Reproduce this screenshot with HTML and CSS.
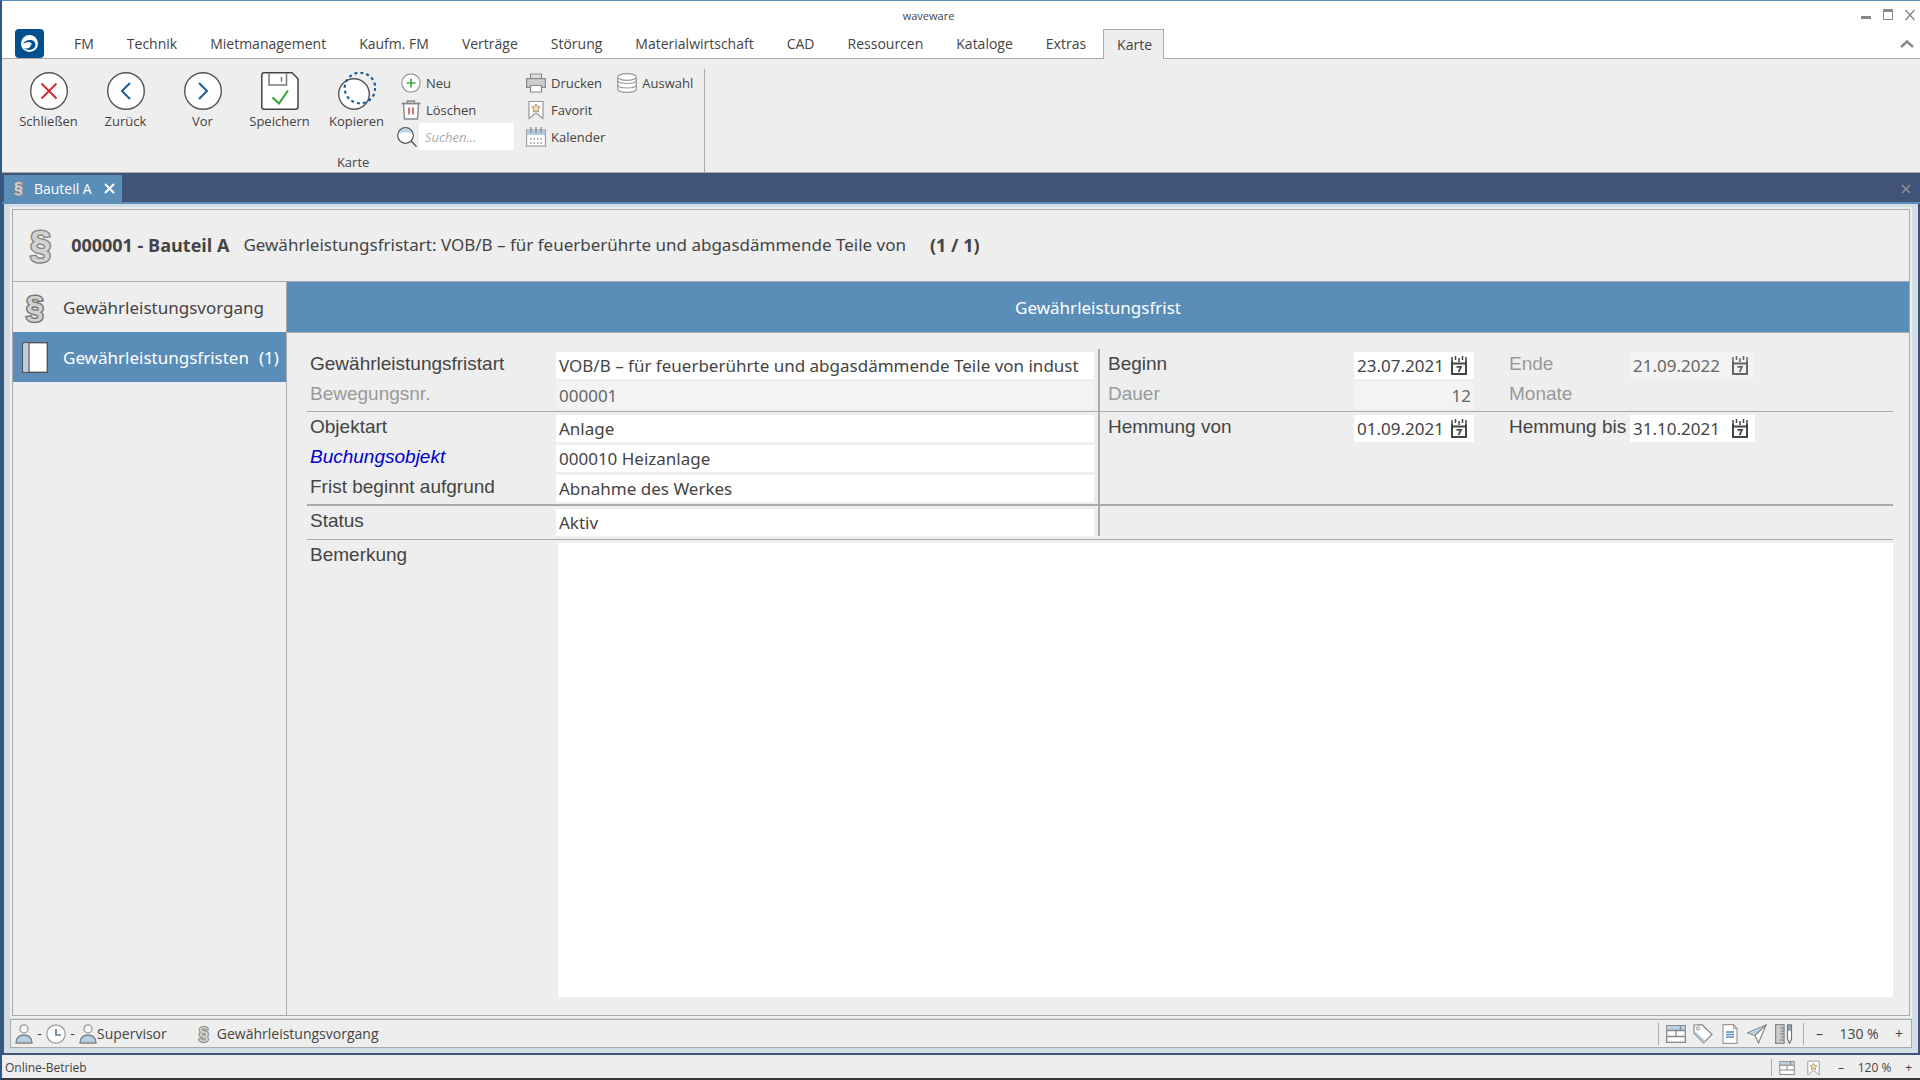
FILE: index.html
```html
<!DOCTYPE html>
<html lang="de">
  <head>
    <meta charset="UTF-8" />
    <meta name="viewport" content="width=device-width, initial-scale=1.0" />
    <title>waveware</title>
    <link rel="stylesheet" href="styles.css">
  </head>
  <body>
    <!-- icons used more than once -->
    <svg class="sprite" aria-hidden="true">
      <symbol id="person" viewBox="0 0 18 20">
        <circle cx="9" cy="4.800" r="4" fill="#fff" stroke="#999" stroke-width="1.300" />
        <path d="M1 19c0-5 3.500-8 8-8s8 3 8 8z" fill="#b9cfe2" stroke="#808488" stroke-width="1.400" />
      </symbol>
      <symbol id="window" viewBox="0 0 20 18">
        <rect x=".7" y=".7" width="18.600" height="16.600" fill="#fff" stroke="#888" stroke-width="1.300" />
        <path d="M1 1h18v4.500H1z" fill="#b9cfe2" />
        <path d="M1 5.500h18M1 11.500h18M10 5.500v6M14.500 1v4.500" fill="none" stroke="#888" stroke-width="1.300" />
      </symbol>
      <symbol id="bookmark" viewBox="0 0 16 19">
        <path d="M1 1h14v17l-7-5.500L1 18z" fill="#fff" stroke="#999" stroke-width="1.200" />
        <path d="M8 3.500l1.300 2.700 3 .4-2.200 2.100.5 3L8 10.300l-2.600 1.400.5-3-2.200-2.100 3-.4z" fill="#f7dfa4" stroke="#998a6a" stroke-width=".9" />
      </symbol>
      <symbol id="datepick" viewBox="0 0 16 20">
        <path d="M1 5v13h14V5M1 7.500h14" fill="none" stroke="currentColor" stroke-width="2" />
        <path d="M1 1v5M4.500 0v4M8 2v4M11.500 0v4M15 1v5" stroke="currentColor" stroke-width="1.500" />
        <path d="M5.500 10.800h4.500l-2.500 5.400" fill="none" stroke="currentColor" stroke-width="1.700" />
      </symbol>
    </svg>

    <header class="titlebar">
      <div class="caption">
        <h1>waveware</h1>
        <div class="winbtns">
          <button type="button" aria-label="Minimieren"><svg width="10" height="12"><path d="M0 7h10v3H0z" fill="#888" /></svg></button>
          <button type="button" aria-label="Maximieren"><svg width="10" height="12"><path d="M.5 1v9.500h9V1" fill="none" stroke="#888" /><path d="M0 0h10v3H0z" fill="#888" /></svg></button>
          <button type="button" aria-label="Beenden"><svg width="10" height="12"><path d="M.5 1l9 10M9.500 1l-9 10" stroke="#888" stroke-width="1.500" /></svg></button>
        </div>
      </div>
      <nav class="menu">
        <svg class="logo" viewBox="0 0 29 29" width="29" height="29">
          <rect width="29" height="29" rx="4" fill="#00508f" />
          <circle cx="14.500" cy="14.500" r="8.500" fill="#fff" />
          <path d="M8 15c2-5 12-6 12.500.5 0 5-6 7-11.500 4 4 .5 7.500-1 6.500-3.500 2 .2 1.500-3-2-3-2 0-3.500.8-5.500 2z" fill="#00508f" />
        </svg>
        <a href="#">FM</a>
        <a href="#">Technik</a>
        <a href="#">Mietmanagement</a>
        <a href="#">Kaufm. FM</a>
        <a href="#">Verträge</a>
        <a href="#">Störung</a>
        <a href="#">Materialwirtschaft</a>
        <a href="#">CAD</a>
        <a href="#">Ressourcen</a>
        <a href="#">Kataloge</a>
        <a href="#">Extras</a>
        <a href="#" class="active">Karte</a>
        <button type="button" class="collapse" aria-label="Menüband ausblenden"><svg width="14" height="8"><path d="M1 7l6-5.500L13 7" fill="none" stroke="#888" stroke-width="2.500" /></svg></button>
      </nav>
    </header>

    <section class="ribbon">
      <div class="group">
        <div class="tools">
          <div class="big">
            <button type="button">
              <svg width="38" height="38"><circle cx="19" cy="19" r="18.300" fill="#fff" stroke="#555" stroke-width="1.400" /><path d="M11.500 11.500l15 15M26.500 11.500l-15 15" stroke="#d9232e" stroke-width="1.800" /></svg>
              Schließen
            </button>
            <button type="button">
              <svg width="38" height="38"><circle cx="19" cy="19" r="18.300" fill="#fff" stroke="#555" stroke-width="1.400" /><path d="M23 11l-8 8 8 8" fill="none" stroke="#1a5c9a" stroke-width="2" /></svg>
              Zurück
            </button>
            <button type="button">
              <svg width="38" height="38"><circle cx="19" cy="19" r="18.300" fill="#fff" stroke="#555" stroke-width="1.400" /><path d="M15 11l8 8-8 8" fill="none" stroke="#1a5c9a" stroke-width="2" /></svg>
              Vor
            </button>
            <button type="button">
              <svg width="38" height="38"><path d="M3 .8h28l6 6V35q0 2.200-2.200 2.200H3Q.8 37.200.8 35V3Q.8.800 3 .8z" fill="#fff" stroke="#444" stroke-width="1.500" /><path d="M8 1v12h17.500V1M20.500 5v4.500" fill="none" stroke="#777" stroke-width="1.500" /><path d="M11.500 25.500l6.500 6 9-13" fill="none" stroke="#2ba52e" stroke-width="2" /></svg>
              Speichern
            </button>
            <button type="button">
              <svg width="38" height="38"><circle cx="16" cy="22" r="15.300" fill="#fff" stroke="#555" stroke-width="1.400" /><circle cx="22" cy="16" r="15.300" fill="none" stroke="#1a5c9a" stroke-width="2.200" stroke-dasharray="3 3" /></svg>
              Kopieren
            </button>
          </div>
          <div class="small">
            <button type="button">
              <svg width="20" height="20"><circle cx="10" cy="10" r="9.200" fill="#fff" stroke="#999" stroke-width="1.200" /><path d="M10 5.500v9M5.500 10h9" stroke="#4aa84c" stroke-width="1.700" /></svg>
              Neu
            </button>
            <button type="button">
              <svg width="20" height="20"><path d="M2.500 3.500l1 15.500h13l1-15.500z" fill="#fff" stroke="#888" stroke-width="1.400" /><path d="M.5 3.500h19M6.500 3V1h7v2" fill="none" stroke="#888" stroke-width="1.300" /><path d="M8 7.500v7M12 7.500v7" stroke="#cc5a60" stroke-width="1.700" /></svg>
              Löschen
            </button>
            <label class="search">
              <svg width="20" height="20"><circle cx="8.500" cy="8.500" r="7.800" fill="#fff" stroke="#555" stroke-width="1.200" /><path d="M2 6.500a7 7 0 0 1 13 0q-6.500-2.500-13 0z" fill="#b9d3ea" /><path d="M14 14l5.500 5.500" stroke="#555" stroke-width="1.400" /></svg>
              <input type="text" placeholder="Suchen..." aria-label="Suchen">
            </label>
          </div>
          <div class="small">
            <button type="button">
              <svg width="20" height="20"><path d="M4.500 6V1h11v5" fill="#ddd" stroke="#888" stroke-width="1.200" /><rect x=".6" y="5.600" width="18.800" height="8.800" fill="#ccc" stroke="#888" stroke-width="1.200" /><path d="M4.500 12.500h11V19h-11z" fill="#fff" stroke="#888" stroke-width="1.200" /></svg>
              Drucken
            </button>
            <button type="button">
              <svg width="20" height="20"><use href="#bookmark" x="2" y="0" width="16" height="20" /></svg>
              Favorit
            </button>
            <button type="button">
              <svg width="20" height="20"><rect x=".6" y="3" width="18.800" height="16" fill="#fff" stroke="#999" stroke-width="1.100" /><path d="M1 3h18v5H1z" fill="#b3cbe0" /><path d="M5 0v6M10 0v6M15 0v6" stroke="#888" stroke-width="1.300" /><path d="M4 12h13M4 16h13" stroke="#999" stroke-width="1.500" stroke-dasharray="1.500 2" /></svg>
              Kalender
            </button>
          </div>
          <div class="small">
            <button type="button">
              <svg width="20" height="20"><path d="M.7 4v12c0 4.500 18.600 4.500 18.600 0V4" fill="#fff" stroke="#999" stroke-width="1.200" /><path d="M.7 7.500c0 4 18.600 4 18.600 0M.7 12c0 4 18.600 4 18.600 0" fill="none" stroke="#999" stroke-width="1.200" /><ellipse cx="10" cy="4" rx="9.300" ry="3.300" fill="#fff" stroke="#999" stroke-width="1.200" /></svg>
              Auswahl
            </button>
          </div>
        </div>
        <p class="groupname">Karte</p>
      </div>
    </section>

    <div class="doctabs">
      <div class="doctab">
        <span class="para" aria-hidden="true">§</span>
        <a href="#">Bauteil A</a>
        <button type="button" aria-label="Registerkarte schließen"><svg width="11" height="11"><path d="M1 1l9 9M10 1l-9 9" stroke="#fff" stroke-width="2" /></svg></button>
      </div>
      <button type="button" aria-label="Alle schließen"><svg width="10" height="10"><path d="M1 1l8 8M9 1L1 9" stroke="#8b9390" stroke-width="1.600" /></svg></button>
    </div>

    <main class="work">
      <div class="card">
        <div class="cardhead">
          <span class="para para-l" aria-hidden="true">§</span>
          <h2>000001 - Bauteil A</h2>
          <p>Gewährleistungsfristart: VOB/B – für feuerberührte und abgasdämmende Teile von</p>
          <strong>(1 / 1)</strong>
        </div>
        <div class="cardbody">
          <nav class="side">
            <a href="#"><span class="sideicon"><span class="para para-m" aria-hidden="true">§</span></span>Gewährleistungsvorgang</a>
            <a href="#" class="active">
              <span class="sideicon"><svg width="26" height="31"><rect x=".7" y=".7" width="24.600" height="29.600" fill="#fff" stroke="#555" stroke-width="1.400" /><path d="M1.500 1.500h5v28h-5z" fill="#b9cfe2" /><path d="M7 1v29" stroke="#666" stroke-width="1.400" /></svg></span>
              Gewährleistungsfristen <span class="count">(1)</span>
            </a>
          </nav>
          <div class="content">
            <h3>Gewährleistungsfrist</h3>
            <form class="form">
              <div class="block">
                <div class="left">
                  <label for="art">Gewährleistungsfristart</label>
                  <input type="text" id="art" value="VOB/B – für feuerberührte und abgasdämmende Teile von indust">
                  <label for="nr" class="off">Bewegungsnr.</label>
                  <input type="text" id="nr" value="000001" readonly>
                </div>
                <div class="right">
                  <label for="beginn">Beginn</label>
                  <div class="date">
                    <input type="text" id="beginn" value="23.07.2021">
                    <button type="button" aria-label="Beginn wählen"><svg width="16" height="20"><use href="#datepick" /></svg></button>
                  </div>
                  <label for="ende" class="off">Ende</label>
                  <div class="date readonly">
                    <input type="text" id="ende" value="21.09.2022" readonly>
                    <button type="button" aria-label="Ende wählen"><svg width="16" height="20"><use href="#datepick" /></svg></button>
                  </div>
                  <label for="dauer" class="off">Dauer</label>
                  <input type="text" id="dauer" class="num" value="12" readonly>
                  <span class="off">Monate</span>
                </div>
              </div>
              <div class="block thick">
                <div class="left">
                  <label for="objektart">Objektart</label>
                  <input type="text" id="objektart" value="Anlage">
                  <a href="#" id="objektlink">Buchungsobjekt</a>
                  <input type="text" aria-labelledby="objektlink" value="000010 Heizanlage">
                  <label for="grund">Frist beginnt aufgrund</label>
                  <input type="text" id="grund" value="Abnahme des Werkes">
                </div>
                <div class="right">
                  <label for="von">Hemmung von</label>
                  <div class="date">
                    <input type="text" id="von" value="01.09.2021">
                    <button type="button" aria-label="Hemmung von wählen"><svg width="16" height="20"><use href="#datepick" /></svg></button>
                  </div>
                  <label for="bis">Hemmung bis</label>
                  <div class="date">
                    <input type="text" id="bis" value="31.10.2021">
                    <button type="button" aria-label="Hemmung bis wählen"><svg width="16" height="20"><use href="#datepick" /></svg></button>
                  </div>
                </div>
              </div>
              <div class="block last">
                <div class="left">
                  <label for="status">Status</label>
                  <input type="text" id="status" value="Aktiv">
                </div>
              </div>
              <div class="remark">
                <label for="bemerkung">Bemerkung</label>
                <textarea id="bemerkung"></textarea>
              </div>
            </form>
          </div>
        </div>
      </div>

      <div class="cardfoot">
        <svg width="18" height="20"><use href="#person" /></svg>
        <span class="dash">-</span>
        <svg width="20" height="20"><circle cx="10" cy="10" r="9.200" fill="#fff" stroke="#999" stroke-width="1.200" /><path d="M10 5v6h5" fill="none" stroke="#5a7f9f" stroke-width="1.700" /></svg>
        <span class="dash">-</span>
        <svg width="18" height="20"><use href="#person" /></svg>
        <span class="user">Supervisor</span>
        <span class="para" aria-hidden="true">§</span>
        <span>Gewährleistungsvorgang</span>
        <div class="footicons">
          <button type="button" aria-label="Maske"><svg width="20" height="18"><use href="#window" /></svg></button>
          <button type="button" aria-label="Etikett"><svg width="20" height="20"><path d="M1 1l8-.3L19 10.500 10.500 19 1 9z" fill="#fff" stroke="#888" stroke-width="1.200" /><path d="M1.500 6.500l11 10.500-2 1.700L1.500 9z" fill="#b9cfe2" /><circle cx="5" cy="4.500" r="1.600" fill="#fff" stroke="#888" /></svg></button>
          <button type="button" aria-label="Dokument"><svg width="20" height="20"><path d="M3 .7h10.500L17 4.500v14.800H3z" fill="#fff" stroke="#999" stroke-width="1.200" /><path d="M13.500.700V4.500H17" fill="none" stroke="#999" /><path d="M6 8h8M6 10.500h8M6 13h8" stroke="#5a8db8" stroke-width="1.600" /></svg></button>
          <button type="button" aria-label="Senden"><svg width="20" height="20"><path d="M19 1L.8 8.800l7.200 2.700L11.500 19z" fill="#fff" stroke="#888" stroke-width="1.200" /><path d="M18 2L2 8.800l6 2z" fill="#b9cfe2" /><path d="M19 1L8 11.500" stroke="#888" stroke-width="1.200" /></svg></button>
          <button type="button" aria-label="Entwurf"><svg width="20" height="20"><rect x="1.600" y=".6" width="8.500" height="18.800" fill="#ccc" stroke="#888" stroke-width="1.200" /><path d="M6 4h4M7 7h3M6 10h4M7 13h3M6 16h4" stroke="#777" /><path d="M13.500 1h4v14l-2 4.500-2-4.500z" fill="#fff" stroke="#777" stroke-width="1.200" /><path d="M13.500 1h4v5h-4z" fill="#8fa5b8" stroke="#777" /></svg></button>
        </div>
        <div class="zoom">
          <button type="button">–</button>
          <span>130 %</span>
          <button type="button">+</button>
        </div>
      </div>
    </main>

    <footer class="statusbar">
      <p>Online-Betrieb</p>
      <div class="statusicons">
        <button type="button" aria-label="Fenster"><svg width="16" height="14"><use href="#window" /></svg></button>
        <button type="button" aria-label="Favoriten"><svg width="13" height="16"><use href="#bookmark" /></svg></button>
        <div class="zoom">
          <button type="button">–</button>
          <span>120 %</span>
          <button type="button">+</button>
        </div>
      </div>
    </footer>
  </body>
</html>
```

FILE: styles.css
```css
* {
  margin: 0;
  padding: 0;
  box-sizing: border-box;
}
body {
  display: flex;
  flex-direction: column;
  min-height: 100vh;
  border-top: 1px solid #5a8db8;
  border-left: 2px solid #2c5a84;
  border-bottom: 2px solid #35363b;
  background-color: #eee;
  color: #444;
  font-family: "Open Sans", "Noto Sans", sans-serif;
  font-size: 13px;
}
button {
  border: 0;
  background: none;
  color: inherit;
  font: inherit;
}
a {
  color: inherit;
  text-decoration: none;
}
svg {
  display: block;
  flex: none;
}
input,
textarea {
  border: 0;
  color: #444;
  font: inherit;
}
.sprite {
  position: absolute;
  width: 0;
  height: 0;
}
/* Paragraphenzeichen */
.para {
  color: #d2d2d2;
  font: bold 18px/20px "Liberation Sans", Arial, sans-serif;
  -webkit-text-stroke: 2px #888;
  paint-order: stroke fill;
}
.para-m {
  font-size: 32px;
  line-height: 32px;
  -webkit-text-stroke: 3px #777;
}
.para-l {
  font-size: 38px;
  line-height: 38px;
  -webkit-text-stroke: 3px #888;
}

/* Titelzeile und Menü */
.titlebar {
  background-color: #fff;
}
.caption {
  display: grid;
  grid-template-columns: 1fr auto 1fr;
  align-items: center;
  height: 28px;
  padding-right: 5px;
}
.caption h1 {
  grid-column: 2;
  padding-right: 60px;
  font-size: 11px;
  font-weight: normal;
}
.winbtns {
  display: flex;
  justify-content: flex-end;
  gap: 12px;
}
.menu {
  display: flex;
  align-items: flex-end;
  gap: 1px;
  height: 30px;
  border-bottom: 1px solid #aaa;
  font-size: 14px;
}
.logo {
  margin: 0 13px;
}
.menu a {
  height: 29px;
  padding: 0 16px;
  line-height: 30px;
}
.menu .active {
  height: 30px;
  margin-bottom: -1px;
  padding: 0 11px 0 13px;
  border: 1px solid #aaa;
  border-bottom: 0;
  background-color: #eee;
  line-height: 29px;
}
.collapse {
  margin: 0 6px 10px auto;
}

/* Menüband */
.ribbon {
  display: flex;
  height: 114px;
  border-bottom: 1px solid #aaa;
}
.group {
  display: flex;
  flex-direction: column;
  justify-content: space-between;
  margin-top: 10px;
  border-right: 1px solid #aaa;
}
.tools {
  display: flex;
  padding: 0 11px 0 8px;
}
.big {
  display: flex;
  padding-top: 3px;
}
.big button {
  display: flex;
  flex-direction: column;
  align-items: center;
  width: 77px;
  line-height: 22px;
}
.small {
  display: flex;
  flex-direction: column;
  margin-left: 2px;
}
.small + .small {
  margin-left: 8px;
}
.small button {
  display: flex;
  align-items: center;
  gap: 5px;
  height: 27px;
  padding-left: 4px;
}
.search {
  display: flex;
  align-items: center;
  gap: 2px;
}
.search input {
  width: 95px;
  height: 27px;
  padding-left: 6px;
}
.search input::placeholder {
  color: #aaa;
  font-style: italic;
}
.groupname {
  line-height: 19px;
  text-align: center;
}

/* Registerkarten */
.doctabs {
  display: flex;
  justify-content: space-between;
  padding: 2px 9px 0 2px;
  border-bottom: 2px solid #5a8db8;
  background-color: #415477;
}
.doctab {
  display: flex;
  align-items: center;
  height: 27px;
  padding: 0 7px 0 10px;
  background-color: #5a8db8;
  color: #fff;
  font-size: 14px;
}
.doctab a {
  margin: 0 12px 0 11px;
}
.doctab .para {
  font-size: 16px;
}

/* Arbeitsbereich */
.work {
  display: flex;
  flex: 1;
  flex-direction: column;
  gap: 3px;
  padding: 5px 6px;
  border: 2px solid #415477;
  border-top: 0;
  background-color: #d2dde6;
}
.card {
  display: flex;
  flex: 1;
  flex-direction: column;
  margin: 0 2px;
  border: 1px solid #aaa;
  outline: 2px solid #eee;
  background-color: #eee;
}
.cardhead {
  display: flex;
  align-items: center;
  height: 72px;
  padding: 0 17px 2px;
  border-bottom: 1px solid #aaa;
  font: 17px "Noto Sans", sans-serif;
}
.cardhead h2 {
  margin: 0 14px 0 20px;
  font: bold 18px "Open Sans", sans-serif;
}
.cardhead strong {
  margin-left: 24px;
  font: bold 18px "Open Sans", sans-serif;
}
.cardbody {
  display: flex;
  flex: 1;
}
.side {
  width: 274px;
  border-right: 1px solid #aaa;
  font: 17px "Noto Sans", sans-serif;
}
.side a {
  display: flex;
  align-items: center;
  height: 50px;
  white-space: nowrap;
}
.side .active {
  background-color: #5a8db8;
  color: #fff;
}
.sideicon {
  display: flex;
  justify-content: center;
  width: 44px;
  margin-right: 6px;
}
.count {
  margin-left: 10px;
}
.content {
  display: flex;
  flex: 1;
  flex-direction: column;
}
.content h3 {
  height: 51px;
  border-bottom: 1px solid #aaa;
  background-color: #5a8db8;
  color: #fff;
  font: 17px/52px "Noto Sans", sans-serif;
  text-align: center;
}

/* Formular */
.form {
  display: flex;
  flex: 1;
  flex-direction: column;
  padding: 16px 16px 18px 20px;
  font: 19px/24px "Liberation Sans", Arial, sans-serif;
}
.block {
  display: flex;
  border-bottom: 1px solid #aaa;
}
.thick {
  border-bottom-width: 2px;
}
.last {
  padding-bottom: 3px;
}
.left,
.right {
  display: grid;
  align-content: start;
  gap: 3px 0;
  padding: 3px 0 2px;
}
.left {
  grid-template-columns: 249px 1fr;
  width: 50%;
  padding-right: 4px;
  border-right: 2px solid #aaa;
}
.right {
  grid-template-columns: 254px 120px 156px 125px;
}
.last .left {
  padding-bottom: 0;
}
.left label,
.left a,
.remark label {
  padding-left: 3px;
}
.left a {
  color: #00c;
  font-style: italic;
}
.right > label,
.right > span {
  padding-left: 8px;
}
.right > :nth-child(4n + 3) {
  padding-left: 35px;
}
.off {
  color: #999;
}
.form input {
  width: 100%;
  min-width: 0;
  height: 27px;
  padding: 0 3px;
  background-color: #fff;
  font: 17px "Noto Sans", sans-serif;
}
.form input:read-only {
  background-color: #f3f3f3;
  color: #666;
}
.form .num {
  text-align: right;
}
.date {
  display: flex;
  align-items: center;
  justify-content: space-between;
  padding-right: 7px;
  background-color: #fff;
}
.readonly {
  background-color: #f3f3f3;
  color: #666;
}
.form .date input {
  width: 96px;
}
.remark {
  display: flex;
  flex: 1;
  padding-top: 3px;
}
.remark label {
  width: 251px;
}
.remark textarea {
  flex: 1;
  resize: none;
}

/* Fußzeilen */
.cardfoot {
  display: flex;
  align-items: center;
  height: 29px;
  padding: 0 8px 0 4px;
  border: 1px solid #aaa;
  background-color: #eee;
  font-size: 14px;
}
.dash {
  width: 13px;
  text-align: center;
}
.user {
  margin-right: 32px;
}
.cardfoot .para {
  margin-right: 8px;
}
.footicons {
  display: flex;
  align-items: center;
  gap: 7px;
  height: 22px;
  margin-left: auto;
  padding: 0 9px 0 7px;
  border-left: 1px solid #aaa;
  border-right: 1px solid #aaa;
}
.zoom {
  display: flex;
  justify-content: space-between;
  width: 99px;
  padding-left: 12px;
}
.statusbar {
  display: flex;
  align-items: center;
  justify-content: space-between;
  height: 23px;
  padding: 2px 8px 0 3px;
  font-size: 12px;
}
.statusicons {
  display: flex;
  align-items: center;
  gap: 12px;
  padding-left: 7px;
  border-left: 1px solid #aaa;
}
.statusicons .zoom {
  width: 80px;
  padding-left: 6px;
}
```
